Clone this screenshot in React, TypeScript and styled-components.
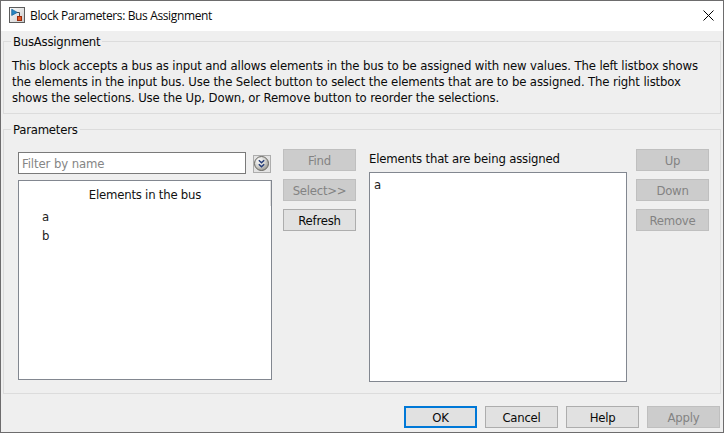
import React from 'react';
import styled, { createGlobalStyle } from 'styled-components';

const GlobalStyle = createGlobalStyle`
  * { box-sizing: border-box; }
  body { margin: 0; overflow: hidden; background: #efefef; }
`;

const Dialog = styled.main`
  width: 724px;
  height: 433px;
  display: flex;
  flex-direction: column;
  background: #efefef;
  border: 1px solid #6d6c6d;
  color: #0a0a0a;
  font: 13px/16px 'DejaVu Sans Condensed', 'DejaVu Sans', sans-serif;
  letter-spacing: -0.13px;
  cursor: default;
`;

const TitleBar = styled.header`
  height: 30px;
  flex: none;
  display: flex;
  align-items: center;
  padding: 0 9px 2px 8px;
  background: #fff;
`;

const Title = styled.h1`
  flex: 1;
  margin: 0 0 0 5px;
  padding-top: 2px;
  font: 400 12px/16px 'Open Sans', 'Noto Sans', sans-serif;
  letter-spacing: -0.37px;
`;

const CloseButton = styled.button`
  display: flex;
  padding: 0;
  border: 0;
  background: none;
`;

const Group = styled.fieldset<{ $height: number }>`
  width: 718px;
  height: ${p => p.$height}px;
  min-width: 0;
  margin: 0 0 0 2px;
  padding: 0;
  border: 1px solid #dcdcdc;
`;

const Legend = styled.legend`
  height: 17px;
  margin-left: 7px;
  padding: 0 2px;
  line-height: 17px;
  letter-spacing: -0.23px;
`;

const Groups = styled.div`
  display: flex;
  flex-direction: column;
  gap: 7px;
  padding-top: 2px;
`;

const Description = styled.p`
  margin: 8px 0 0 8px;
  white-space: nowrap;
`;

const Columns = styled.div`
  display: flex;
  padding: 11px 0 0 14px;
`;

const SourceColumn = styled.div`
  width: 254px;
  padding-top: 3px;
  display: flex;
  flex-direction: column;
  gap: 6px;
`;

const FilterRow = styled.div`
  display: flex;
  align-items: center;
  gap: 7px;
  height: 22px;
`;

const FilterInput = styled.input`
  width: 228px;
  height: 22px;
  padding: 1px 3px 0;
  border: 1px solid #7a7a7a;
  border-radius: 0;
  background: #fff;
  outline: none;
  font: inherit;
  letter-spacing: -0.1px;
  &::placeholder { color: #858585; opacity: 1; }
`;

const OptionsButton = styled.button`
  width: 18px;
  height: 18px;
  display: flex;
  margin-top: 1px;
  padding: 0;
  border: 1px solid #adadad;
  background: #e3e3e3;
`;

const ListBox = styled.div<{ $height: number }>`
  height: ${p => p.$height}px;
  border: 1px solid #828790;
  background: #fff;
`;

const ListHeader = styled.div`
  height: 25px;
  padding: 6px 0 0 1px;
  border-right: 1px solid #e3e3e3;
  text-align: center;
  letter-spacing: -0.22px;
  color: #111;
`;

const ListItem = styled.div<{ $indent: number; $top?: number }>`
  height: 19px;
  padding-left: ${p => p.$indent}px;
  margin-top: ${p => p.$top ?? 0}px;
  line-height: 19px;
  color: #222;
`;

const ButtonColumn = styled.div<{ $left: number }>`
  margin-left: ${p => p.$left}px;
  display: flex;
  flex-direction: column;
  gap: 8px;
`;

const PushButton = styled.button<{ $primary?: boolean }>`
  width: 73px;
  height: 22px;
  padding: 1px 0 0;
  border: ${p => (p.$primary ? '2px solid #0078d7' : '1px solid #adadad')};
  border-radius: 0;
  background: #e1e1e1;
  color: #0a0a0a;
  font: inherit;
  line-height: 16px;
  letter-spacing: -0.25px;
  &:disabled { background: #ccc; border-color: #bfbfbf; color: #838383; }
`;

const AssignedColumn = styled.div`
  width: 258px;
  margin-left: 13px;
`;

const AssignedLabel = styled.div`
  height: 23px;
  padding-top: 2px;
  letter-spacing: -0.19px;
`;

const Footer = styled.footer`
  display: flex;
  justify-content: flex-end;
  gap: 8px;
  padding: 12px 3px 0 0;
`;

const BlockIcon = () => (
  <svg width="16" height="16" viewBox="0 0 16 16">
    <defs>
      <linearGradient id="paper" x1="0" y1="0" x2="1" y2="1">
        <stop offset="0" stopColor="#fff" />
        <stop offset="1" stopColor="#c9c9c9" />
      </linearGradient>
    </defs>
    <rect x=".5" y=".5" width="15" height="15" fill="url(#paper)" stroke="#5c5c5c" />
    <path d="M8 5.500h2.500V9" fill="none" stroke="#4b4b4b" />
    <path d="M2.700 2.200v6.300L8.300 5.400z" fill="#2586c2" stroke="#125b91" strokeWidth=".7" />
    <rect x="8.500" y="9.500" width="4" height="4" fill="#e65a24" stroke="#9c2a0c" />
  </svg>
);

const CloseIcon = () => (
  <svg width="11" height="11" viewBox="0 0 11 11">
    <path d="M.5.5l10 10M10.500.5l-10 10" stroke="#000" />
  </svg>
);

const ExpandIcon = () => (
  <svg width="16" height="16" viewBox="0 0 16 16">
    <defs>
      <radialGradient id="knob" cx=".35" cy=".3" r=".75">
        <stop offset="0" stopColor="#fff" />
        <stop offset=".55" stopColor="#d3d3d0" />
        <stop offset="1" stopColor="#96958f" />
      </radialGradient>
    </defs>
    <circle cx="7.500" cy="7.500" r="7" fill="url(#knob)" stroke="#686762" />
    <path d="M4.800 4.300l2.700 2.500 2.700-2.500M4.800 8.300l2.700 2.500 2.700-2.500" fill="none" stroke="#233b78" strokeWidth="1.5" />
  </svg>
);

export default function App() {
  return (
    <>
      <GlobalStyle />
      <Dialog>
        <TitleBar>
          <BlockIcon />
          <Title>Block Parameters: Bus Assignment</Title>
          <CloseButton aria-label="Close"><CloseIcon /></CloseButton>
        </TitleBar>
        <Groups>
          <Group $height={81}>
            <Legend>BusAssignment</Legend>
            <Description>
              This block accepts a bus as input and allows elements in the bus to be assigned with new values. The left listbox shows<br />
              the elements in the input bus. Use the Select button to select the elements that are to be assigned. The right listbox<br />
              shows the selections. Use the Up, Down, or Remove button to reorder the selections.
            </Description>
          </Group>
          <Group $height={273}>
            <Legend>Parameters</Legend>
            <Columns>
              <SourceColumn>
                <FilterRow>
                  <FilterInput placeholder="Filter by name" />
                  <OptionsButton aria-label="Filter options"><ExpandIcon /></OptionsButton>
                </FilterRow>
                <ListBox $height={200}>
                  <ListHeader>Elements in the bus</ListHeader>
                  <ListItem $indent={23} $top={1}>a</ListItem>
                  <ListItem $indent={23}>b</ListItem>
                </ListBox>
              </SourceColumn>
              <ButtonColumn $left={11}>
                <PushButton disabled>Find</PushButton>
                <PushButton disabled>Select&gt;&gt;</PushButton>
                <PushButton>Refresh</PushButton>
              </ButtonColumn>
              <AssignedColumn>
                <AssignedLabel>Elements that are being assigned</AssignedLabel>
                <ListBox $height={210}>
                  <ListItem $indent={4} $top={2}>a</ListItem>
                </ListBox>
              </AssignedColumn>
              <ButtonColumn $left={9}>
                <PushButton disabled>Up</PushButton>
                <PushButton disabled>Down</PushButton>
                <PushButton disabled>Remove</PushButton>
              </ButtonColumn>
            </Columns>
          </Group>
        </Groups>
        <Footer>
          <PushButton $primary>OK</PushButton>
          <PushButton>Cancel</PushButton>
          <PushButton>Help</PushButton>
          <PushButton disabled>Apply</PushButton>
        </Footer>
      </Dialog>
    </>
  );
}
